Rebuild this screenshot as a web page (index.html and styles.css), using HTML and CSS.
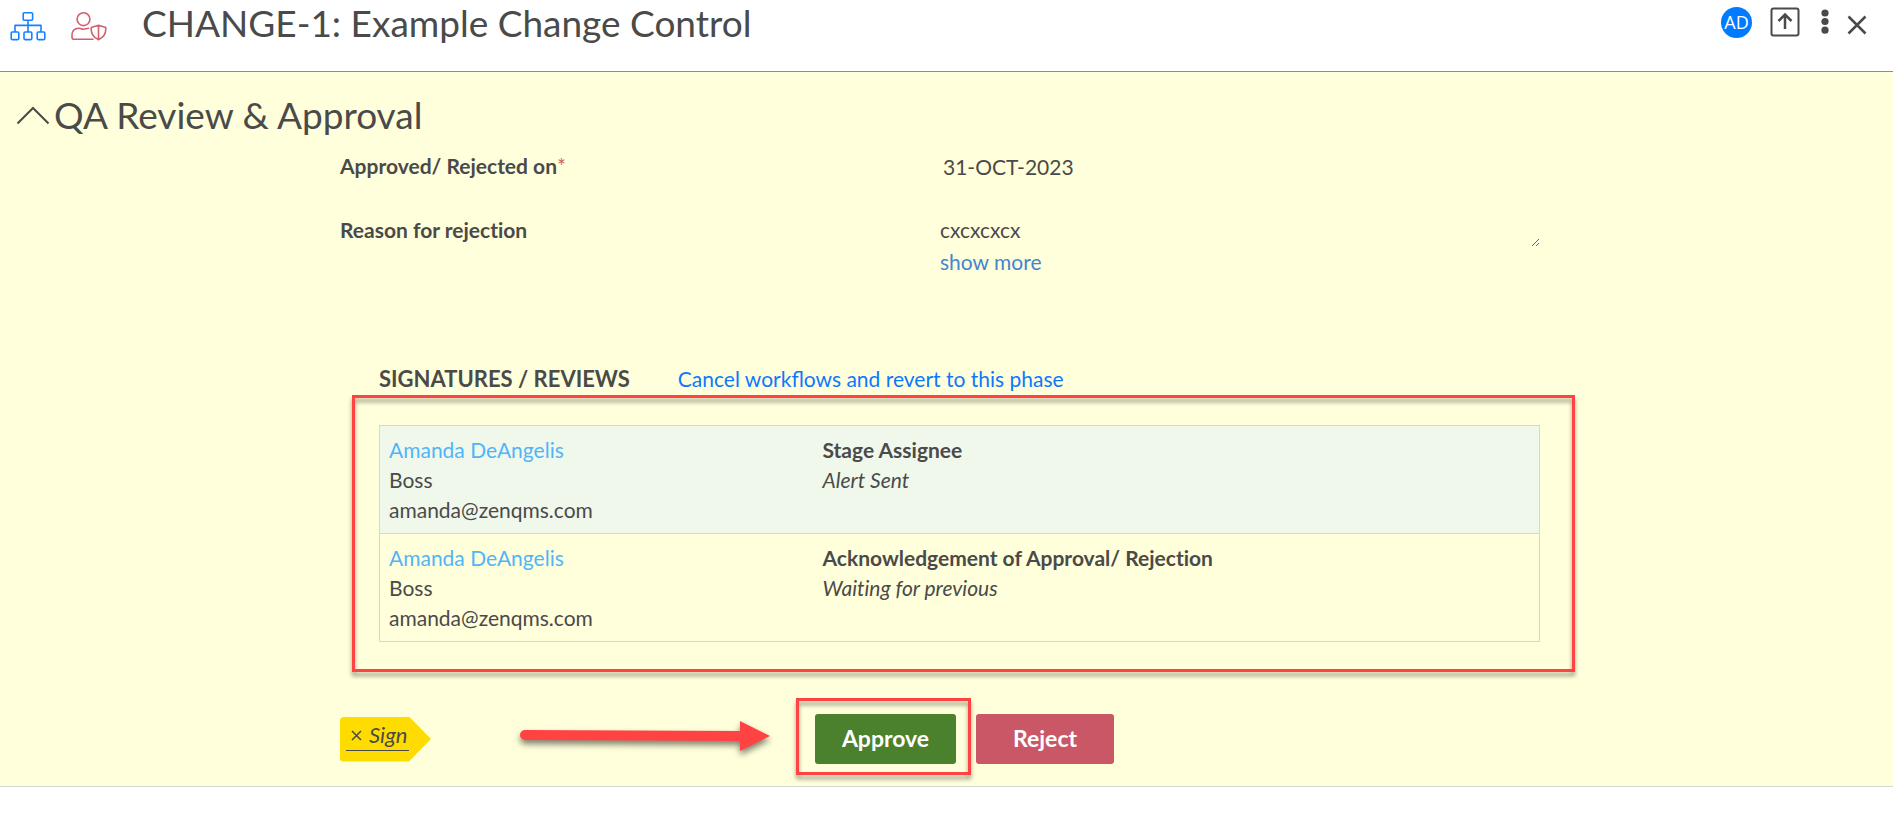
FILE: index.html
```html
<!DOCTYPE html>
<html lang="en">
<head>
<meta charset="utf-8">
<title>CHANGE-1: Example Change Control</title>
<link rel="stylesheet" href="styles.css">
</head>
<body>
<header class="topbar">
  <div class="topbar-icons">
    <button class="icon-btn blue" type="button" aria-label="Workflow map">
      <svg width="36" height="30" viewBox="0 0 36 30" fill="none" stroke="currentColor" stroke-width="1.6" stroke-linejoin="round">
        <rect x="13.2" y="1.8" width="9.4" height="7.4" rx="1"/>
        <rect x="1.2" y="21" width="7.6" height="7.6" rx="1"/>
        <rect x="14" y="21" width="7.8" height="7.6" rx="1"/>
        <rect x="27.2" y="21" width="7.6" height="7.6" rx="1"/>
        <path d="M18 9.200V21M5 21V14.400H31V21"/>
      </svg>
    </button>
    <button class="icon-btn rose" type="button" aria-label="User permissions">
      <svg width="36" height="30" viewBox="0 0 36 30" fill="none" stroke="currentColor" stroke-width="1.6" stroke-linejoin="round" stroke-linecap="round">
        <circle cx="12.500" cy="8.200" r="6.400"/>
        <path d="M22 28.200H3Q1 28.200 1 26.200V24.500Q1 17.300 8 17.300C10 17.300 10.500 18.200 12.500 18.200S15 17.300 17.500 17.300"/>
        <path d="M27.500 14.200L34.800 16.600C35.200 22.500 32.500 26.500 27.500 28.700C22.500 26.500 19.800 22.500 20.200 16.600ZM27.500 14.200V28.500"/>
      </svg>
    </button>
  </div>
  <h1 class="page-title">CHANGE-1: Example Change Control</h1>
  <div class="topbar-actions">
    <span class="avatar">AD</span>
    <button class="icon-btn export" type="button" aria-label="Export">
      <svg width="30" height="30" viewBox="0 0 30 30" fill="none" stroke="currentColor" stroke-width="2">
        <rect x="1.500" y="1.500" width="27" height="27" rx="2"/>
        <path d="M15 22V8M8.500 14L15 7.500L21.500 14" stroke-width="2.500"/>
      </svg>
    </button>
    <button class="icon-btn more" type="button" aria-label="More">
      <svg width="8" height="26" viewBox="0 0 8 26" fill="currentColor">
        <circle cx="4" cy="4" r="3.600"/><circle cx="4" cy="12.500" r="3.600"/><circle cx="4" cy="21.200" r="3.600"/>
      </svg>
    </button>
    <button class="icon-btn close" type="button" aria-label="Close">
      <svg width="20" height="20" viewBox="0 0 20 20" fill="none" stroke="currentColor" stroke-width="2.500">
        <path d="M1.500 1.500L18.500 18.500M18.500 1.500L1.500 18.500"/>
      </svg>
    </button>
  </div>
</header>

<main class="phase">
  <h2 class="phase-title">
    <svg width="34" height="20" viewBox="0 0 34 20" fill="none" stroke="currentColor" stroke-width="2"><path d="M1.500 18.500L17 3L32.500 18.500"/></svg>
    QA Review &amp; Approval
  </h2>
  <form class="phase-body">
    <div class="field">
      <label for="decided">Approved/ Rejected on<span class="required">*</span></label>
      <input class="date" id="decided" type="text" value="31-OCT-2023">
    </div>
    <div class="field reason">
      <label for="reason">Reason for rejection</label>
      <div class="value">
        <textarea id="reason" rows="1">cxcxcxcx</textarea>
        <a class="show-more" href="#reason">show more</a>
      </div>
    </div>

    <section class="reviews">
      <div class="reviews-head">
        <h3>SIGNATURES / REVIEWS</h3>
        <a href="#revert">Cancel workflows and revert to this phase</a>
      </div>
      <div class="marked">
        <table class="reviewers">
          <tr class="active">
            <td class="person"><a href="#amanda">Amanda DeAngelis</a><br>Boss<br>amanda@zenqms.com</td>
            <td><strong>Stage Assignee</strong><br><em>Alert Sent</em></td>
          </tr>
          <tr>
            <td class="person"><a href="#amanda">Amanda DeAngelis</a><br>Boss<br>amanda@zenqms.com</td>
            <td><strong>Acknowledgement of Approval/ Rejection</strong><br><em>Waiting for previous</em></td>
          </tr>
        </table>
      </div>
    </section>

    <div class="decision">
      <div class="sign-tag"><span class="sign-line"><svg width="11" height="11" viewBox="0 0 11 11" fill="none" stroke="currentColor" stroke-width="1.500"><path d="M1 1L10 10M10 1L1 10"/></svg><span class="sign-word">Sign</span></span></div>
      <svg class="arrow" width="250" height="30" viewBox="0 0 250 30" fill="#ff4343">
        <path d="M5 9L220 10V0L250 15L220 30V20L5 19A5 5 0 0 1 5 9Z"/>
      </svg>
      <div class="marked-button"><button class="btn approve" type="button">Approve</button></div>
      <button class="btn reject" type="button">Reject</button>
    </div>
  </form>
</main>
</body>
</html>
```
FILE: styles.css
```css
* {
  box-sizing: border-box;
}

body {
  margin: 0;
  background: #fff;
  color: #4a4a4a;
  font: 21px/30px Lato, "Liberation Sans", sans-serif;
  font-variant-ligatures: none;
}

h1,
h2,
h3 {
  margin: 0;
}

a {
  color: #0d78ff;
  text-decoration: none;
}

input,
textarea {
  display: block;
  padding: 0;
  border: 0;
  background: transparent;
  color: inherit;
  font: inherit;
}

.topbar {
  display: flex;
  align-items: flex-start;
  min-height: 72px;
  padding: 0 26px 0 10px;
  border-bottom: 1px solid #8c8c8c;
}

.topbar-icons {
  display: flex;
  gap: 25px;
  width: 132px;
  padding-top: 11px;
}

.icon-btn {
  display: block;
  flex: none;
  padding: 0;
  border: 0;
  background: none;
  color: inherit;
  line-height: 0;
}

.blue {
  color: #1583ff;
}

.rose {
  color: #d2606e;
}

.page-title {
  flex: 1;
  font-size: 37px;
  font-weight: 400;
  line-height: 46px;
}

.topbar-actions {
  display: flex;
  align-items: center;
  height: 44px;
}

.avatar {
  width: 31px;
  height: 31px;
  margin-right: 18px;
  border-radius: 50%;
  background: #007bff;
  color: #fff;
  font: 18px/31px "Open Sans", sans-serif;
  text-align: center;
}

.export {
  margin-right: 21px;
}

.more {
  margin-right: 18px;
}

.close {
  padding-top: 5px;
}

.phase {
  padding: 21px 13px 22px 0;
  border-bottom: 1px solid #d6d6d6;
  background: #ffffdb;
}

.phase-title {
  display: flex;
  align-items: center;
  gap: 4px;
  padding-left: 16px;
  font-size: 37px;
  font-weight: 400;
  line-height: 44px;
}

.phase-body {
  max-width: 1200px;
  margin: 12px auto 0;
}

.field {
  display: grid;
  grid-template-columns: 1fr 1fr;
  min-height: 64px;
}

.field label {
  padding-top: 2px;
  font-weight: 700;
}

.required {
  color: #d2606e;
  font-weight: 400;
}

.date {
  width: 100%;
  height: 32px;
  padding: 2px 0 0 3px;
}

.reason {
  min-height: 151px;
}

textarea {
  width: 100%;
  height: 34px;
  padding-top: 2px;
  resize: vertical;
  overflow: hidden;
}

.show-more {
  display: block;
  color: #4485cf;
}

.reviews {
  padding-left: 39px;
}

.reviews-head {
  display: flex;
  align-items: baseline;
  gap: 48px;
}

.reviews-head h3 {
  font-size: 22px;
}

.reviews-head a {
  font-variant-ligatures: common-ligatures;
}

.marked,
.marked-button {
  position: relative;
}

.marked {
  margin-top: 31px;
}

.marked::after,
.marked-button::after {
  content: "";
  position: absolute;
  border: 3px solid #ff4343;
  filter: drop-shadow(0 4px 2px rgba(0, 0, 0, 0.4));
  pointer-events: none;
}

.marked::after {
  inset: -30px -35px -30px -27px;
}

.marked-button::after {
  inset: -16px -15px -11px -19px;
}

.reviewers {
  width: 100%;
  border: 1px solid #d6d6d6;
  border-collapse: collapse;
  table-layout: fixed;
}

.reviewers tr {
  border-bottom: 1px solid #d6d6d6;
}

.reviewers td {
  padding: 9px 9px 8px;
  vertical-align: top;
}

.reviewers .active {
  background: #f0f8ec;
}

.reviewers .person {
  width: 434px;
}

.person a {
  color: #50b5f8;
}

.decision {
  display: flex;
  align-items: center;
  margin-top: 72px;
}

.sign-tag {
  flex: none;
  width: 91px;
  height: 45px;
  padding: 4px 0 0 6px;
  border-radius: 4px;
  background: #ffdc00;
  clip-path: polygon(0 0, 69px 0, 100% 50%, 69px 100%, 0 100%);
}

.sign-line {
  display: flex;
  align-items: center;
  gap: 7px;
  width: 63px;
  height: 30px;
  padding-left: 5px;
  border-bottom: 1px solid #4a4a4a;
}

.sign-word {
  font-size: 22px;
  font-style: italic;
}

.arrow {
  flex: none;
  margin: 0 45px 6px 89px;
  overflow: visible;
  filter: drop-shadow(0 4px 3px rgba(0, 0, 0, 0.5));
}

.btn {
  display: block;
  height: 50px;
  padding: 0 0 2px;
  border: 0;
  border-radius: 3px;
  color: #fff;
  font: 700 23px/30px Lato, "Liberation Sans", sans-serif;
}

.approve {
  width: 141px;
  background: #4b802c;
}

.reject {
  width: 138px;
  margin-left: 20px;
  background: #ca5766;
}
```
